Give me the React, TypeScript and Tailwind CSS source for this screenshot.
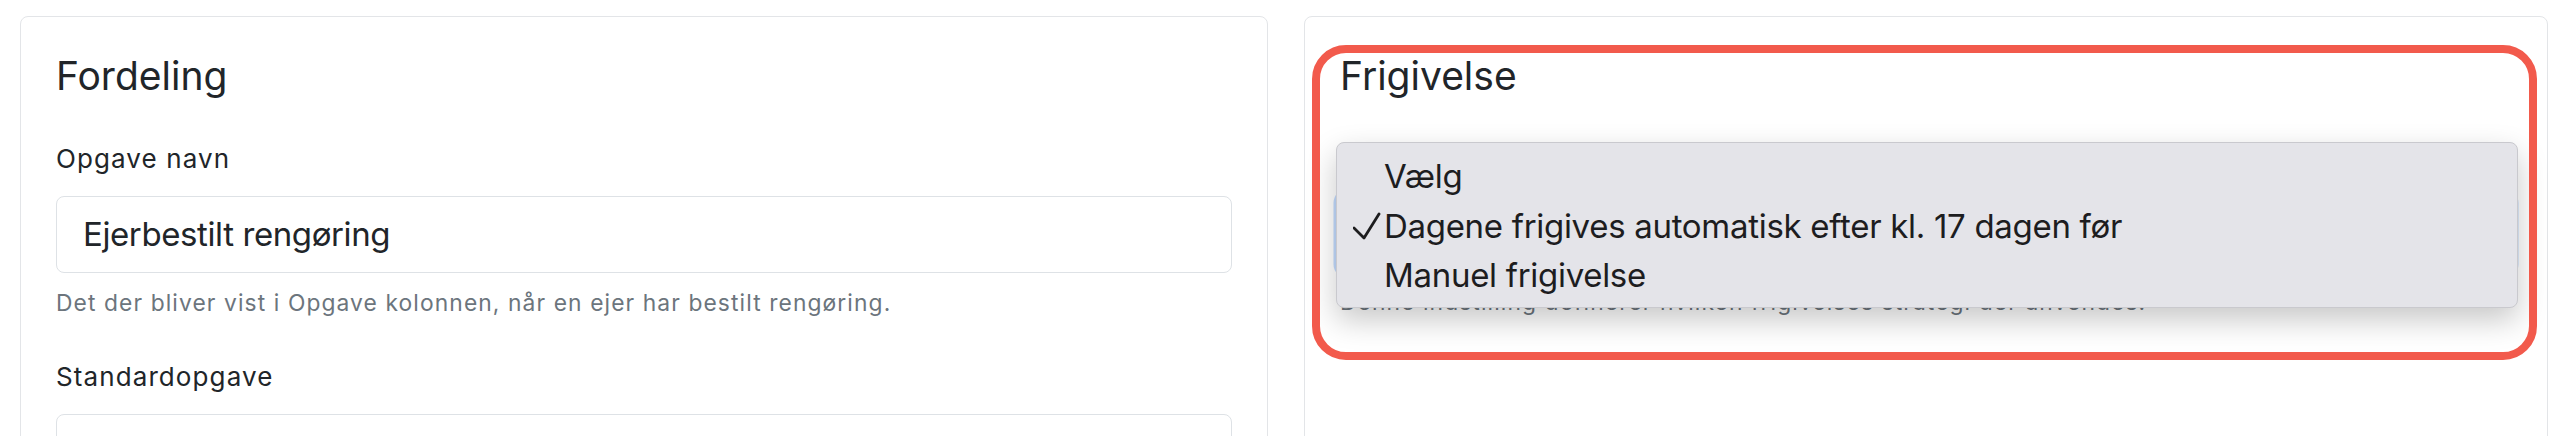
import React from "react"

const options = [
  { label: "Vælg", checked: false },
  { label: "Dagene frigives automatisk efter kl. 17 dagen før", checked: true },
  { label: "Manuel frigivelse", checked: false },
]

function CheckMark() {
  return (
    <svg width="28" height="28" viewBox="0 0 28 28" fill="none" className="ml-[16px]">
      <polyline
        points="1,16 11,26 26,2"
        stroke="#1d1d1f"
        strokeWidth="2.8"
        strokeLinecap="round"
        strokeLinejoin="round"
      />
    </svg>
  )
}

export default function App() {
  return (
    <div className="h-[436px] overflow-hidden bg-white pl-[20px] pt-[16px] font-['Inter','Liberation_Sans',sans-serif] text-[#212529]">
      <div className="grid grid-cols-[1248px_1244px] gap-[36px]">
        {/* Fordeling */}
        <section className="h-[520px] rounded-[8px] border border-[#e3e5e8] px-[35px] pt-[36px]">
          <h4 className="text-[39px] leading-[1.2]">Fordeling</h4>
          <label className="mt-[39px] block text-[26px] leading-[1.5] tracking-[1.1px]">Opgave navn</label>
          <input
            readOnly
            value="Ejerbestilt rengøring"
            className="mt-[18px] block h-[77px] w-full rounded-[8px] border border-[#dee2e6] px-[26px] text-[33px] tracking-[-0.4px] text-[#212529] outline-none"
          />
          <p className="mt-[13px] text-[22.8px] leading-[1.5] tracking-[1.1px] text-[#6c757d]">
            Det der bliver vist i Opgave kolonnen, når en ejer har bestilt rengøring.
          </p>
          <label className="mt-[37px] block text-[26px] leading-[1.5] tracking-[1.1px]">Standardopgave</label>
          <div className="mt-[18px] h-[77px] rounded-[8px] border border-[#dee2e6]" />
        </section>

        {/* Frigivelse */}
        <section className="relative h-[520px] rounded-[8px] border border-[#e3e5e8] px-[35px] pt-[36px]">
          <h4 className="text-[39px] leading-[1.2]">Frigivelse</h4>
          <div className="mt-[95.6px] h-[77px] rounded-[8px] border border-[#86b7fe] shadow-[0_0_0_6.5px_rgba(13,110,253,0.25)]" />
          <p className="mt-[13px] text-[22.8px] leading-[1.5] tracking-[1.1px] text-[#6c757d]">
            Denne indstilling definerer hvilken frigivelses strategi der anvendes.
          </p>

          {/* native select menu */}
          <div className="absolute left-[31px] top-[125px] h-[166px] w-[1182px] rounded-[8px] border border-[#c9c9ce] bg-[#e4e4e9] pt-[9px] text-[33px] tracking-[-0.3px] text-[#1d1d1f] shadow-[0_12px_30px_rgba(0,0,0,0.22)]">
            {options.map((o) => (
              <div key={o.label} className="flex h-[49.5px] items-center">
                <span className="flex w-[47px] shrink-0 items-center">{o.checked && <CheckMark />}</span>
                <span className="leading-[1.5]">{o.label}</span>
              </div>
            ))}
          </div>

          {/* annotation */}
          <div className="pointer-events-none absolute left-[7px] top-[28px] h-[315px] w-[1225px] rounded-[34px] border-[8px] border-[#f25a4c]" />
        </section>
      </div>
    </div>
  )
}
